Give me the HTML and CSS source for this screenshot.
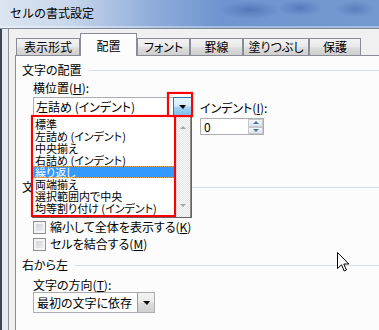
FILE: index.html
```html
<!DOCTYPE html>
<html lang="ja">
<head>
  <meta charset="UTF-8" />
  <title>セルの書式設定</title>
  <link rel="stylesheet" href="styles.css">
</head>
<body>
  <div class="window">
    <div class="titlebar">セルの書式設定</div>
    <div class="frame">
      <div class="client">
        <div class="tabs">
          <div class="tab t-num">表示形式</div>
          <div class="tab active">配置</div>
          <div class="tab t-font">フォント</div>
          <div class="tab t-border">罫線</div>
          <div class="tab t-fill">塗りつぶし</div>
          <div class="tab t-protect">保護</div>
        </div>
        <div class="panel">
          <div class="group-title">文字の配置</div>
          <div class="field">
            <div class="label label-first">横位置(<u>H</u>):</div>
            <div class="row">
              <div class="combo combo-h">
                <span class="combo-text">左詰め (インデント)</span>
                <span class="drop hot"><i class="arrow"></i></span>
                <div class="droplist">
                  <ul class="items">
                    <li>標準</li>
                    <li>左詰め (インデント)</li>
                    <li>中央揃え</li>
                    <li>右詰め (インデント)</li>
                    <li class="selected">繰り返し</li>
                    <li>両端揃え</li>
                    <li>選択範囲内で中央</li>
                    <li>均等割り付け (インデント)</li>
                  </ul>
                  <div class="vscroll">
                    <i class="sarrow up"></i>
                    <i class="sarrow down"></i>
                  </div>
                </div>
                <div class="mark mark-btn"></div>
                <div class="mark mark-list"></div>
              </div>
              <div class="indent">
                <div class="label">インデント(<u>I</u>):</div>
                <div class="spin">
                  <span class="spin-value">0</span>
                  <span class="spin-btns">
                    <span class="spin-btn"><i class="tri-up"></i></span>
                    <span class="spin-btn"><i class="tri-down"></i></span>
                  </span>
                </div>
              </div>
            </div>
            <div class="label label-v">縦位置(<u>V</u>):</div>
            <div class="combo combo-v">
              <span class="combo-text">中央揃え</span>
              <span class="drop"><i class="arrow"></i></span>
            </div>
          </div>

          <div class="group-title group-control">文字の制御</div>
          <div class="field checks">
            <label class="check"><span class="box"></span>縮小して全体を表示する(<u>K</u>)</label>
            <label class="check"><span class="box"></span>セルを結合する(<u>M</u>)</label>
          </div>

          <div class="group-title group-rtl">右から左</div>
          <div class="field">
            <div class="label label-dir">文字の方向(<u>T</u>):</div>
            <div class="combo combo-dir">
              <span class="combo-text">最初の文字に依存</span>
              <span class="drop"><i class="arrow"></i></span>
            </div>
          </div>
        </div>
      </div>
    </div>

    <svg class="cursor" width="13" height="21" viewBox="0 0 13 21">
      <path d="M0.5 0.5 L0.5 16.5 L4.5 12.8 L7.2 19 L9.4 18 L6.8 12 L11.8 12 Z" fill="#fff" stroke="#000" stroke-width="1" stroke-linejoin="miter"/>
    </svg>
  </div>
</body>
</html>
```

FILE: styles.css
```css
* {
  box-sizing: border-box;
  margin: 0;
  padding: 0;
}
body {
  width: 379px;
  height: 330px;
  overflow: hidden;
  font-family: "Noto Sans CJK JP", sans-serif;
  font-size: 12px;
  color: #000;
  background: #f0f0f0;
}
u {
  text-decoration: underline;
}
.window {
  position: relative;
  height: 330px;
}
.titlebar {
  height: 29px;
  padding: 6px 0 0 10px;
  line-height: 14px;
  background:
    radial-gradient(ellipse 30px 9px at 250px 10px, rgba(60, 95, 165, 0.55), transparent),
    radial-gradient(ellipse 22px 8px at 300px 8px, rgba(60, 95, 165, 0.5), transparent),
    radial-gradient(ellipse 20px 8px at 355px 9px, rgba(60, 95, 165, 0.45), transparent),
    linear-gradient(to right, #dce5f0 0%, #c8d7ec 18%, #8fadda 40%, #6e95d0 58%, #7399d1 100%);
  border-bottom: 1px solid #7f8b99;
  box-shadow: inset 0 -2px 0 rgba(255, 255, 255, 0.35);
  white-space: nowrap;
}
.frame {
  display: flex;
  height: 301px;
  border-left: 2px solid #3b4452;
  background: #e7eaee;
  padding-left: 6px;
}
.client {
  flex: 1;
  background: #f0f0f0;
  border-left: 1px solid #8e9399;
  padding: 4px 0 0 6px;
  overflow: hidden;
  font-feature-settings: "palt";
}

/* tabs */
.tabs {
  position: relative;
  z-index: 1;
  display: flex;
  align-items: flex-end;
  height: 22px;
  padding-left: 1px;
}
.tab {
  flex: none;
  height: 17px;
  line-height: 15px;
  text-align: center;
  white-space: nowrap;
  border: 1px solid #898c95;
  border-bottom: none;
  background: linear-gradient(#f2f2f2 0%, #ebebeb 45%, #dddddd 55%, #cfcfcf 100%);
}
.t-num { width: 64px; }
.t-font { width: 53px; }
.t-border { width: 53px; }
.t-fill { width: 66px; }
.t-protect { width: 52px; }
.tab.active {
  width: 57px;
  height: 23px;
  margin-bottom: -1px;
  padding-top: 5px;
  line-height: 14px;
  background: #fcfcfc;
}
.panel {
  height: 280px;
  border: 1px solid #898c95;
  border-right: none;
  background: #fcfcfc;
  padding-left: 6px;
}

/* groups */
.group-title {
  display: flex;
  align-items: center;
  height: 14px;
  line-height: 14px;
  margin-top: 7px;
  white-space: nowrap;
}
.group-title::after {
  content: "";
  flex: 1;
  height: 1px;
  margin-left: 7px;
  background: #d5dfe5;
}
.field {
  padding-left: 11px;
}
.label {
  height: 14px;
  line-height: 14px;
  white-space: nowrap;
}
.label-first { margin-top: 4px; }
.row {
  display: flex;
  margin-top: 2px;
}

/* combo boxes */
.combo {
  position: relative;
  display: flex;
  height: 19px;
  border: 1px solid #abadb3;
  background: #fff;
}
.combo-h, .combo-v { width: 159px; }
.combo-text {
  flex: 1;
  padding-left: 2px;
  line-height: 17px;
  white-space: nowrap;
  overflow: hidden;
}
.drop {
  display: flex;
  align-items: center;
  justify-content: center;
  width: 17px;
  border-left: 1px solid #9a9a9a;
  background: linear-gradient(#f3f3f3 0%, #ebebeb 45%, #dcdcdc 55%, #cfcfcf 100%);
}
.drop.hot {
  width: 19px;
  margin: -1px -1px -1px 0;
  border: 1px solid #3c6f9c;
  background: linear-gradient(#e6f3fc 0%, #d4ebfb 48%, #a4d4f5 52%, #7fbfe9 100%);
}
.arrow {
  width: 0;
  height: 0;
  border-left: 4px solid transparent;
  border-right: 3px solid transparent;
  border-top: 4px solid #000;
}

/* drop-down list */
.droplist {
  position: absolute;
  left: -2px;
  top: 18px;
  z-index: 2;
  display: flex;
  width: 160px;
  height: 102px;
  border: 1px solid #646464;
  background: #fff;
}
.items {
  list-style: none;
  width: 142px;
  padding-top: 1px;
}
.items li {
  height: 12px;
  line-height: 12px;
  font-size: 11px;
  padding-left: 2px;
  white-space: nowrap;
}
.items li.selected {
  background: #3399ff;
  color: #fff;
  outline: 1px dotted #e8a04a;
  outline-offset: -1px;
}
.vscroll {
  flex: 1;
  display: flex;
  flex-direction: column;
  align-items: center;
  justify-content: space-between;
  padding: 9px 0 10px;
  border-right: 1px solid #8a8a8a;
  background: repeating-conic-gradient(#e4e4e4 0 25%, #fafafa 0 50%) 0 0 / 2px 2px;
}
.sarrow {
  width: 0;
  height: 0;
  border-left: 3px solid transparent;
  border-right: 3px solid transparent;
}
.sarrow.up { border-bottom: 3px solid #a6a6a6; }
.sarrow.down { border-top: 3px solid #a6a6a6; }

/* red callouts drawn over the dialog */
.mark {
  position: absolute;
  z-index: 3;
  border: 2px solid #ff0000;
  box-shadow: 0 0 1px rgba(255, 0, 0, 0.6);
}
.mark-btn {
  left: 133px;
  top: -6px;
  width: 26px;
  height: 25px;
}
.mark-list {
  left: -3px;
  top: 17px;
  width: 145px;
  height: 102px;
}

/* indent spinner */
.indent {
  margin-left: 8px;
  padding-top: 4px;
}
.spin {
  display: flex;
  width: 64px;
  height: 17px;
  margin-top: 3px;
  border: 1px solid #abadb3;
  background: #fff;
}
.spin-value {
  flex: 1;
  padding-left: 3px;
  line-height: 15px;
}
.spin-btns {
  display: flex;
  flex-direction: column;
  width: 15px;
}
.spin-btn {
  flex: 1;
  display: flex;
  align-items: center;
  justify-content: center;
  border: 1px solid #c4c9d0;
  background: linear-gradient(#f4f6f9, #dfe5ec);
}
.tri-up, .tri-down {
  width: 0;
  height: 0;
  border-left: 3px solid transparent;
  border-right: 3px solid transparent;
}
.tri-up { border-bottom: 3px solid #4a74a8; }
.tri-down { border-top: 3px solid #4a74a8; }

.label-v { margin-top: 3px; }
.combo-v { margin-top: 2px; }

/* text control */
.group-control { margin-top: 7px; }
.checks {
  margin-top: 26px;
}
.check {
  display: flex;
  align-items: center;
  height: 14px;
  line-height: 14px;
  white-space: nowrap;
}
.check + .check {
  margin-top: 3px;
}
.box {
  width: 13px;
  height: 13px;
  margin-right: 4px;
  border: 1px solid #8e8f8f;
  background: linear-gradient(135deg, #c9ccd1, #f3f3f3);
  box-shadow: inset 0 0 0 2px #f4f4f4;
}

/* right to left */
.group-rtl { margin-top: 7px; }
.label-dir { margin-top: 6px; }
.combo-dir {
  width: 122px;
  height: 21px;
}
.combo-dir .combo-text {
  line-height: 19px;
  padding-left: 3px;
}

.cursor {
  position: absolute;
  left: 337px;
  top: 252px;
}
```
